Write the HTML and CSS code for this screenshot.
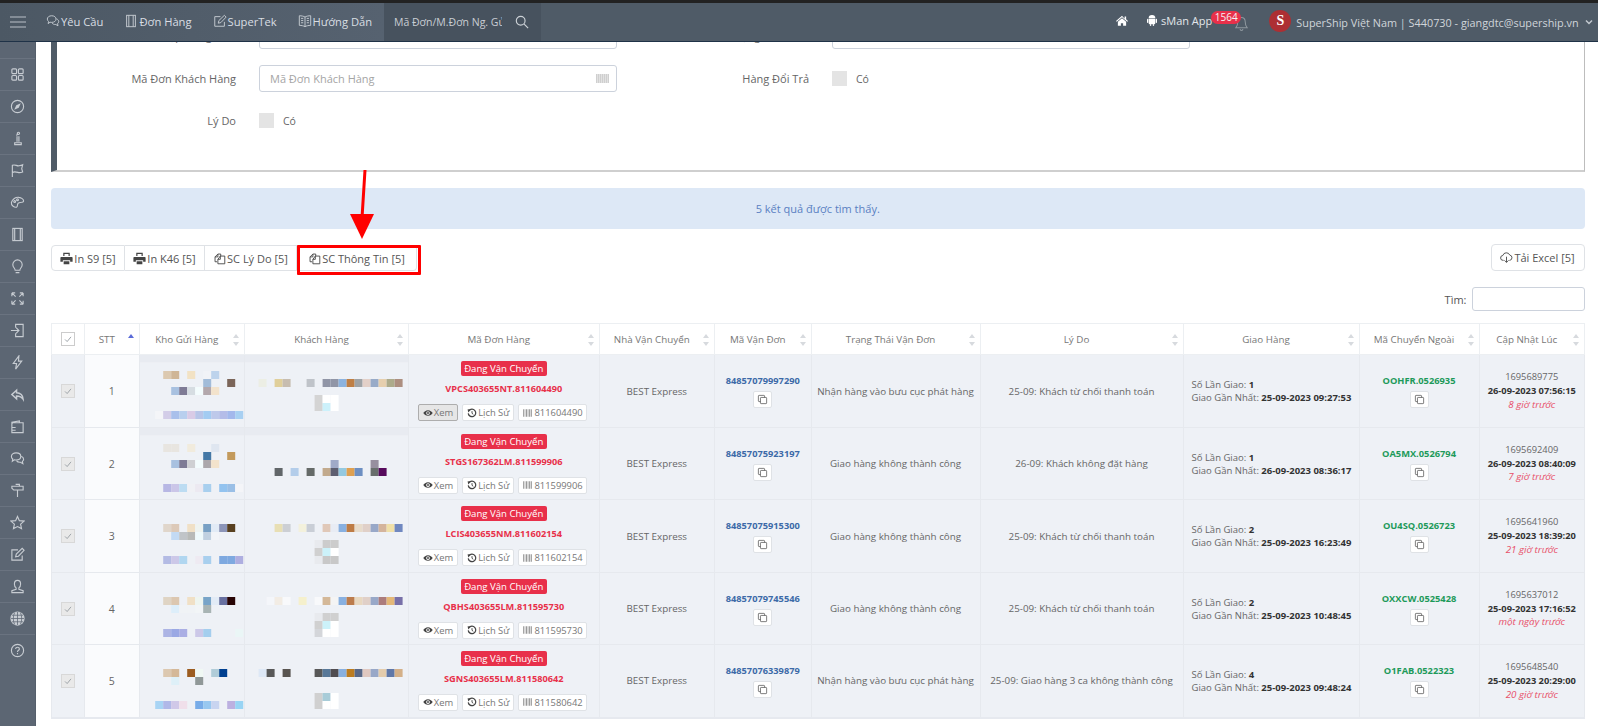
FILE: index.html
```html
<!DOCTYPE html>
<html lang="vi">
<head>
<meta charset="utf-8">
<title>SuperShip</title>
<link rel="stylesheet" href="styles.css">
</head>
<body>
<svg class="defs" xmlns="http://www.w3.org/2000/svg">
  <symbol id="i-copy" viewBox="0 0 16 16"><path d="M5 11H3a1 1 0 0 1-1-1V3a1 1 0 0 1 1-1h7a1 1 0 0 1 1 1v2"/><rect x="5" y="5" width="9" height="9" rx="1"/></symbol>
  <symbol id="i-copy2" viewBox="0 0 16 16"><path d="M5 12H2.500V6L6 2.500h3.500V5"/><path d="M6 2.500V6H2.500"/><path d="M9 5h5.500v9.500H6V9z"/><path d="M9 5v4H6"/></symbol>
  <symbol id="i-print" viewBox="0 0 16 16"><path class="solid" d="M4 1h8v4h-1.500V2.500h-5V5H4zM1.500 6h13a1 1 0 0 1 1 1v5h-3v-2h-9v2h-3V7a1 1 0 0 1 1-1zM4.500 11.500h7V15h-7z"/></symbol>
  <symbol id="i-eye" viewBox="0 0 16 16"><path class="solid" d="M8 3.500c3.500 0 6.200 2.500 7.500 4.500-1.300 2-4 4.500-7.500 4.500S1.800 10 .5 8C1.800 6 4.500 3.500 8 3.500zm0 1.500a3 3 0 1 0 0 6 3 3 0 0 0 0-6zm0 1.500a1.500 1.500 0 1 1 0 3 1.500 1.500 0 0 1 0-3z"/></symbol>
  <symbol id="i-hist" viewBox="0 0 16 16"><path d="M3 4.500a6 6 0 1 1-1 4" stroke-width="2"/><path class="solid" d="M1 2l5 .5L2 7z"/><path d="M8 5v3.500l2 1.500" stroke-width="1.500"/></symbol>
  <symbol id="i-bar" viewBox="0 0 16 16"><path class="solid" d="M1 2h1.500v12H1zM3.500 2h1v12h-1zM5.500 2h2v12h-2zM8.500 2h1v12h-1zM10.500 2h2v12h-2zM13.500 2h1.500v12h-1.500z"/></symbol>
  <symbol id="i-check" viewBox="0 0 14 14"><path d="M3.500 7.500l2.500 2.500 4.500-5.500"/></symbol>
  <symbol id="i-chat" viewBox="0 0 16 16"><path d="M6.500 2c3 0 5 1.700 5 3.800s-2 3.800-5 3.800c-.7 0-1.300-.1-1.900-.2L2.500 11l.4-2.500C2 7.800 1.500 6.900 1.500 5.800 1.500 3.700 3.500 2 6.500 2z"/><path d="M12 5.500c1.500.6 2.500 1.800 2.500 3.200 0 1-.5 1.800-1.300 2.400l.5 2.400-2.500-1.500c-1.800.2-3.500-.5-4.300-1.700"/></symbol>
  <symbol id="i-note" viewBox="0 0 16 16"><rect x="3" y="1.500" width="10" height="13"/><path d="M5.500 1.500v13M10.500 1.500v13"/></symbol>
  <symbol id="i-edit" viewBox="0 0 16 16"><path d="M13 9v5H2V3h6.500"/><path d="M6 10.500l.7-3L13 1.500l2 2-6 6.300z"/></symbol>
</svg>

<div class="topstrip"></div>
<header class="navbar">
  <div class="nav-left">
    <svg class="burger" viewBox="0 0 16 12"><path d="M0 1h16M0 6h16M0 11h16"/></svg>
    <a class="nav-item"><svg class="ic14"><use href="#i-chat"/></svg>Yêu Cầu</a>
    <a class="nav-item"><svg class="ic14"><use href="#i-note"/></svg>Đơn Hàng</a>
    <a class="nav-item"><svg class="ic14"><use href="#i-edit"/></svg>SuperTek</a>
    <a class="nav-item"><svg class="ic14" viewBox="0 0 16 16"><path d="M8 3.500C6.500 2.500 4 2 1.500 2v11c2.500 0 5 .5 6.500 1.500 1.500-1 4-1.500 6.500-1.500V2C12 2 9.500 2.500 8 3.500zM8 3.500v11M3.500 5H6M3.500 7.500H6M3.500 10H6M10 5h2.500M10 7.500h2.500M10 10h2.500"/></svg>Hướng Dẫn</a>
  </div>
  <div class="nav-search">
    <span class="search-text">Mã Đơn/M.Đơn Ng. Gửi</span>
    <svg class="search-ic" viewBox="0 0 16 16"><circle cx="6.500" cy="6.500" r="5"/><path d="M10.500 10.500L15 15"/></svg>
  </div>
  <div class="nav-right">
    <svg class="home" viewBox="0 0 16 14"><path d="M8 .5L0 7.500l1 1L8 2.800l7 5.700 1-1-2.500-2.200V1.500h-2v3z"/><path d="M8 4L2.500 8.500V14H6.500v-3.500h3V14H13.500V8.500z"/></svg>
    <span class="sman">
      <svg class="android" viewBox="0 0 12 14"><path d="M2 5.500h8V11a1 1 0 0 1-1 1H3a1 1 0 0 1-1-1z"/><path d="M2 5a4 4 0 0 1 8 0z"/><rect x="0" y="5.500" width="1.500" height="5" rx=".75"/><rect x="10.500" y="5.500" width="1.500" height="5" rx=".75"/><rect x="3.500" y="12" width="1.500" height="2"/><rect x="7" y="12" width="1.500" height="2"/></svg>
      sMan App
      <span class="bell-wrap">
        <svg class="bell" viewBox="0 0 14 16"><path d="M7 1.500c-2.500 0-4 2-4 4.500 0 3-.8 5-2 6.500h12c-1.200-1.500-2-3.500-2-6.500 0-2.500-1.500-4.500-4-4.500zM5.500 14a1.500 1.500 0 0 0 3 0"/></svg>
        <span class="badge-count">1564</span>
      </span>
    </span>
    <span class="avatar"><span class="avatar-s">S</span></span>
    <span class="user">SuperShip Việt Nam | S440730 - giangdtc@supership.vn</span>
    <svg class="chev" viewBox="0 0 8 6"><path d="M1 1.500l3 3 3-3"/></svg>
  </div>
</header>

<div class="body-wrap">
  <aside class="sidebar">
    <div class="side-item"><svg viewBox="0 0 16 16"><rect x="2" y="2" width="5" height="5" rx="1"/><rect x="9" y="2" width="5" height="5" rx="1"/><rect x="2" y="9" width="5" height="5" rx="1"/><rect x="9" y="9" width="5" height="5" rx="1"/></svg></div>
    <div class="side-item"><svg viewBox="0 0 16 16"><circle cx="8" cy="8" r="6.500"/><path class="solid" d="M11.500 4.500L9.300 9.300 4.500 11.500 6.700 6.700z"/></svg></div>
    <div class="side-item"><svg viewBox="0 0 16 16"><circle cx="9" cy="2.500" r="1.200"/><path d="M6.500 4.500l2.500-1M7.500 5.500v6M9.500 5.500v6"/><path d="M5 14.500h7V12.500H5z"/></svg></div>
    <div class="side-item"><svg viewBox="0 0 16 16"><path d="M2.500 15V2.500c3-1.500 4.500 1 7 .5 1.500-.2 3-.5 4-1l-1 4 1 3.500c-2 .8-3.500 1-5 .5-2-.6-4-1-6 0"/></svg></div>
    <div class="side-item"><svg viewBox="0 0 16 16"><path d="M1.500 8c1-3.500 4.500-6 8-5.500 2.500.3 5 2 5 4 0 1.500-2 1.500-3.500 1.500-2 0-3 1-3 2.500 0 1 0 2-1 2.500C5 13.500 1 11.500 1.500 8z"/><circle cx="5" cy="7" r="1"/><circle cx="8" cy="5" r="1"/></svg></div>
    <div class="side-item"><svg viewBox="0 0 16 16"><rect x="3" y="1.500" width="10" height="13"/><path d="M5 1.500v13M11 1.500v13"/></svg></div>
    <div class="side-item"><svg viewBox="0 0 16 16"><path d="M5.500 12C5.500 10 3 9 3 6a5 5 0 0 1 10 0c0 3-2.500 4-2.500 6zM6 14.500h4"/></svg></div>
    <div class="side-item"><svg viewBox="0 0 16 16"><path d="M2 2l4 4M2 2v3.500M2 2h3.500M14 2l-4 4M14 2v3.500M14 2h-3.500M2 14l4-4M2 14v-3.500M2 14h3.500M14 14l-4-4M14 14v-3.500M14 14h-3.500"/></svg></div>
    <div class="side-item"><svg viewBox="0 0 16 16"><path d="M6 5V1.500h8v13H6V11"/><path d="M1 8h8M6.500 5l3 3-3 3"/></svg></div>
    <div class="side-item"><svg viewBox="0 0 16 16"><path d="M9.500 1L3.500 9H7l-1 6 6.500-8.500H9z"/></svg></div>
    <div class="side-item"><svg viewBox="0 0 16 16"><path class="thick" d="M7 3.500L2 8l5 4.500V9.500c3 0 5.500 1 7 3.500 0-4-3-7-7-7z"/></svg></div>
    <div class="side-item"><svg viewBox="0 0 16 16"><path d="M2 6V3.500L10 2v2M2 6v8.500h12V4H3.500A1.500 1.500 0 0 0 2 6zM2 9h4M2 12h4"/></svg></div>
    <div class="side-item"><svg viewBox="0 0 16 16"><use href="#i-chat"/></svg></div>
    <div class="side-item"><svg viewBox="0 0 16 16"><path d="M2 3.500h12v4H4L2 5.500zM8 7.500V15M6 1.500h4V3.500"/></svg></div>
    <div class="side-item"><svg viewBox="0 0 16 16"><path d="M8 1.500l2 4.500 5 .5-3.700 3.300 1 4.700L8 12.300 3.700 14.500l1-4.700L1 6.500 6 6z"/></svg></div>
    <div class="side-item"><svg viewBox="0 0 16 16"><use href="#i-edit"/></svg></div>
    <div class="side-item"><svg viewBox="0 0 16 16"><path d="M8 1.500c2 0 3.300 1.500 3.300 3.700 0 2-.8 3.500-1.800 4.300v1.500L14 12.500v2H2v-2L6.500 11V9.500C5.500 8.700 4.700 7.200 4.700 5.200 4.700 3 6 1.500 8 1.500z"/></svg></div>
    <div class="side-item"><svg class="globe" viewBox="0 0 16 16"><circle cx="8" cy="8" r="7"/><path class="globe-l" d="M1 8h14M2 4.500h12M2 11.500h12M8 1v14M5 1.500c-2 4-2 9 0 13M11 1.500c2 4 2 9 0 13"/></svg></div>
    <div class="side-item"><svg viewBox="0 0 16 16"><circle cx="8" cy="8" r="6.500"/><path d="M6 6.300C6 5 7 4.500 8 4.500S10 5.200 10 6.300c0 1.500-2 1.500-2 3.200"/><path d="M8 10.700v1.300"/></svg></div>
  </aside>

  <main class="main">
    <section class="panel">
      <div class="form-row">
        <div class="field"><label class="f-label">Nhập Hàng Đơn</label><div class="f-input"></div></div>
        <div class="field field-r"><label class="f-label">Trạng Thái Đơn</label><div class="f-input"></div></div>
      </div>
      <div class="form-row">
        <div class="field"><label class="f-label">Mã Đơn Khách Hàng</label><div class="f-input"><span class="ph">Mã Đơn Khách Hàng</span><span class="f-chip"></span></div></div>
        <div class="field field-r"><label class="f-label">Hàng Đổi Trả</label><span class="f-check"></span><span class="f-yes">Có</span></div>
      </div>
      <div class="form-row form-row-last">
        <div class="field"><label class="f-label">Lý Do</label><span class="f-check"></span><span class="f-yes">Có</span></div>
      </div>
    </section>

    <div class="alert">5 kết quả được tìm thấy.</div>

    <div class="actions">
      <div class="btn-group">
        <button class="btn btn-s9"><svg class="ic13"><use href="#i-print"/></svg>In S9 [5]</button>
        <button class="btn btn-k46"><svg class="ic13"><use href="#i-print"/></svg>In K46 [5]</button>
        <button class="btn btn-ly"><svg class="ic13"><use href="#i-copy2"/></svg>SC Lý Do [5]</button>
        <button class="btn btn-tt"><svg class="ic13"><use href="#i-copy2"/></svg>SC Thông Tin [5]<span class="redbox"></span></button>
      </div>
      <button class="btn btn-excel"><svg class="ic13" viewBox="0 0 16 16"><path d="M4.500 11.500H4A3 3 0 0 1 3.500 5.500 4.500 4.500 0 0 1 12 5a3.300 3.300 0 0 1 0 6.500h-.5"/><path d="M8 7v7M5.500 11.500L8 14l2.500-2.500"/></svg>Tải Excel [5]</button>
    </div>

    <div class="find"><span>Tìm:</span><div class="find-input"></div></div>

    <table class="grid">
      <colgroup>
        <col class="c1"><col class="c2"><col class="c3"><col class="c4"><col class="c5"><col class="c6"><col class="c7"><col class="c8"><col class="c9"><col class="c10"><col class="c11"><col class="c12">
      </colgroup>
      <thead>
        <tr>
          <th class="th-check"><span class="chk chk-h"><svg><use href="#i-check"/></svg></span></th>
          <th class="sort-asc">STT</th>
          <th class="sort">Kho Gửi Hàng</th>
          <th class="sort">Khách Hàng</th>
          <th class="sort">Mã Đơn Hàng</th>
          <th class="sort">Nhà Vận Chuyển</th>
          <th class="sort">Mã Vận Đơn</th>
          <th class="sort">Trạng Thái Vận Đơn</th>
          <th class="sort">Lý Do</th>
          <th class="sort">Giao Hàng</th>
          <th class="sort">Mã Chuyển Ngoài</th>
          <th class="sort">Cập Nhật Lúc</th>
        </tr>
      </thead>
      <tbody>
        <tr>
          <td><span class="chk"><svg><use href="#i-check"/></svg></span></td>
          <td class="stt">1</td>
          <td class="mosaic"><svg class="px-kho" viewBox="-1.900 -2 13.250 8.875"><rect class="band" x="-2" y="-2"/>
            <rect x="1" y="0" fill="#dcc9b0"/><rect x="2" y="0" fill="#cfb596"/><rect x="4" y="0" fill="#f2e2c4"/><rect x="6" y="0" fill="#f1f3f7"/><rect x="7" y="0" fill="#bdd3ec"/>
            <rect x="6" y="1" fill="#a2bcd9"/><rect x="9" y="1" fill="#7b6559"/>
            <rect x="2" y="2" fill="#a8c1e0"/><rect x="3" y="2" fill="#7e7b95"/><rect x="4" y="2" fill="#d6dde2"/><rect x="5" y="2" fill="#f3fcfd"/><rect x="6" y="2" fill="#b3a8ac"/><rect x="7" y="2" fill="#f3e3cc"/>
            <rect x="0" y="5" fill="#f4f5f8"/><rect x="1" y="5" fill="#d3cde8"/><rect x="2" y="5" fill="#a9c0eb"/><rect x="3" y="5" fill="#b8cfee"/><rect x="4" y="5" fill="#d9cbe6"/><rect x="5" y="5" fill="#b8c5e8"/><rect x="6" y="5" fill="#a3ccf2"/><rect x="7" y="5" fill="#bec9ea"/><rect x="8" y="5" fill="#b4bce8"/><rect x="9" y="5" fill="#a3b8ec"/><rect x="10" y="5" fill="#a8d0f2"/>
          </svg></td>
          <td class="mosaic"><svg class="px-kh" viewBox="-1.700 -2 20.500 8.875"><rect class="band" x="-2" y="-2"/>
            <rect x="0" y="1" fill="#eceee4"/><rect x="2" y="1" fill="#e0cf9a"/><rect x="3" y="1" fill="#c7bdb0"/><rect x="6" y="1" fill="#bfc3c9"/><rect x="8" y="1" fill="#9095a6"/><rect x="9" y="1" fill="#9095a6"/><rect x="10" y="1" fill="#8cb3df"/><rect x="11" y="1" fill="#bf7f45"/><rect x="12" y="1" fill="#9fa3a6"/><rect x="13" y="1" fill="#e3d0c8"/><rect x="14" y="1" fill="#98abc8"/><rect x="15" y="1" fill="#e6cfae"/><rect x="16" y="1" fill="#adab8b"/><rect x="17" y="1" fill="#ad8f80"/>
            <rect x="7" y="3" fill="#d4d4d4"/><rect x="8" y="3" fill="#fff"/><rect x="9" y="3" fill="#fff"/>
            <rect x="7" y="4" fill="#d4d4d4"/><rect x="8" y="4" fill="#ccf1fb"/><rect x="9" y="4" fill="#fff"/>
          </svg></td>
          <td class="order">
            <span class="status">Đang Vận Chuyển</span>
            <a class="code">VPCS403655NT.811604490</a>
            <div class="mini-row"><span class="mini mini-on"><svg><use href="#i-eye"/></svg>Xem</span><span class="mini"><svg><use href="#i-hist"/></svg>Lịch Sử</span><span class="mini"><svg class="bar"><use href="#i-bar"/></svg>811604490</span></div>
          </td>
          <td>BEST Express</td>
          <td><a class="bl">84857079997290</a><span class="copy"><svg><use href="#i-copy"/></svg></span></td>
          <td>Nhận hàng vào bưu cục phát hàng</td>
          <td>25-09: Khách từ chối thanh toán</td>
          <td class="deliver">Số Lần Giao: <b>1</b><br>Giao Gần Nhất: <b>25-09-2023 09:27:53</b></td>
          <td><a class="gr">OOHFR.0526935</a><span class="copy"><svg><use href="#i-copy"/></svg></span></td>
          <td class="upd">1695689775<br><b>26-09-2023 07:56:15</b><br><i>8 giờ trước</i></td>
        </tr>
        <tr>
          <td><span class="chk"><svg><use href="#i-check"/></svg></span></td>
          <td class="stt">2</td>
          <td class="mosaic"><svg class="px-kho" viewBox="-1.900 -2 13.250 8.875"><rect class="band" x="-2" y="-2"/>
            <rect x="1" y="0" fill="#e8e5e0"/><rect x="2" y="0" fill="#e8e5e0"/><rect x="4" y="0" fill="#f1ebdd"/><rect x="7" y="0" fill="#dfe6f0"/>
            <rect x="6" y="1" fill="#4478a6"/><rect x="9" y="1" fill="#c39a5c"/>
            <rect x="2" y="2" fill="#a8c1e0"/><rect x="3" y="2" fill="#7e7b95"/><rect x="4" y="2" fill="#cfd0d3"/><rect x="5" y="2" fill="#f3fcfd"/><rect x="6" y="2" fill="#aca8ac"/><rect x="7" y="2" fill="#f3e3cc"/>
            <rect x="1" y="5" fill="#b7b7e4"/><rect x="2" y="5" fill="#cbc6e8"/><rect x="3" y="5" fill="#bcdcf2"/><rect x="4" y="5" fill="#f0f1f5"/><rect x="5" y="5" fill="#ece9f1"/><rect x="6" y="5" fill="#a8cfee"/><rect x="8" y="5" fill="#93c3ef"/><rect x="9" y="5" fill="#9abfe6"/><rect x="10" y="5" fill="#f4f5f8"/>
          </svg></td>
          <td class="mosaic"><svg class="px-kh" viewBox="-1.700 -2 20.500 8.875"><rect class="band" x="-2" y="-2"/>
            <rect x="9" y="2" fill="#a0aac8"/><rect x="14" y="2" fill="#978f9f"/>
            <rect x="2" y="3" fill="#616669"/><rect x="4" y="3" fill="#b3cdea"/><rect x="6" y="3" fill="#656a68"/><rect x="8" y="3" fill="#c2aa8d"/><rect x="9" y="3" fill="#5d5e70"/><rect x="10" y="3" fill="#94c9e0"/><rect x="11" y="3" fill="#dea051"/><rect x="12" y="3" fill="#6d8fc2"/><rect x="14" y="3" fill="#686e6c"/><rect x="15" y="3" fill="#560a5c"/>
          </svg></td>
          <td class="order">
            <span class="status">Đang Vận Chuyển</span>
            <a class="code">STGS167362LM.811599906</a>
            <div class="mini-row"><span class="mini"><svg><use href="#i-eye"/></svg>Xem</span><span class="mini"><svg><use href="#i-hist"/></svg>Lịch Sử</span><span class="mini"><svg class="bar"><use href="#i-bar"/></svg>811599906</span></div>
          </td>
          <td>BEST Express</td>
          <td><a class="bl">84857075923197</a><span class="copy"><svg><use href="#i-copy"/></svg></span></td>
          <td>Giao hàng không thành công</td>
          <td>26-09: Khách không đặt hàng</td>
          <td class="deliver">Số Lần Giao: <b>1</b><br>Giao Gần Nhất: <b>26-09-2023 08:36:17</b></td>
          <td><a class="gr">OA5MX.0526794</a><span class="copy"><svg><use href="#i-copy"/></svg></span></td>
          <td class="upd">1695692409<br><b>26-09-2023 08:40:09</b><br><i>7 giờ trước</i></td>
        </tr>
        <tr>
          <td><span class="chk"><svg><use href="#i-check"/></svg></span></td>
          <td class="stt">3</td>
          <td class="mosaic"><svg class="px-kho" viewBox="-1.900 -2 13.250 8.875">
            <rect x="1" y="1" fill="#e0d6cb"/><rect x="2" y="1" fill="#dcc9b8"/><rect x="4" y="1" fill="#f0e0c6"/><rect x="5" y="1" fill="#eef3f0"/><rect x="6" y="1" fill="#78a0c4"/><rect x="7" y="1" fill="#e2ebf6"/><rect x="8" y="1" fill="#8c95b8"/><rect x="9" y="1" fill="#584020"/>
            <rect x="2" y="2" fill="#c3daf4"/><rect x="3" y="2" fill="#c0c4c8"/><rect x="4" y="2" fill="#b8bab8"/><rect x="5" y="2" fill="#effafc"/><rect x="6" y="2" fill="#c0d0e0"/><rect x="7" y="2" fill="#f2f4f8"/>
            <rect x="1" y="5" fill="#b3bbe4"/><rect x="2" y="5" fill="#ccc8e8"/><rect x="3" y="5" fill="#b0d6f0"/><rect x="5" y="5" fill="#eeeaf2"/><rect x="6" y="5" fill="#a8cfee"/><rect x="8" y="5" fill="#7ea9e0"/><rect x="9" y="5" fill="#7ea9e0"/><rect x="10" y="5" fill="#aeaee0"/>
          </svg></td>
          <td class="mosaic"><svg class="px-kh" viewBox="-1.700 -2 20.500 8.875">
            <rect x="2" y="1" fill="#e8dfb4"/><rect x="3" y="1" fill="#cccfd4"/><rect x="5" y="1" fill="#f3f1dc"/><rect x="6" y="1" fill="#c9ced6"/><rect x="8" y="1" fill="#e0c8b8"/><rect x="9" y="1" fill="#e8ecf4"/><rect x="10" y="1" fill="#88b0e0"/><rect x="11" y="1" fill="#be7c45"/><rect x="12" y="1" fill="#e8dccb"/><rect x="13" y="1" fill="#e0d0c8"/><rect x="14" y="1" fill="#98a8c8"/><rect x="15" y="1" fill="#d4b49c"/><rect x="16" y="1" fill="#f0e0a8"/><rect x="17" y="1" fill="#7088c0"/>
            <rect x="7" y="3" fill="#e8eaee"/><rect x="8" y="3" fill="#ccc"/><rect x="9" y="3" fill="#ccc"/>
            <rect x="7" y="4" fill="#d0d0d0"/><rect x="8" y="4" fill="#ccf2fa"/><rect x="9" y="4" fill="#fff"/>
            <rect x="7" y="5" fill="#e8eaee"/><rect x="8" y="5" fill="#c8c8c8"/><rect x="9" y="5" fill="#c8c8c8"/>
          </svg></td>
          <td class="order">
            <span class="status">Đang Vận Chuyển</span>
            <a class="code">LCIS403655NM.811602154</a>
            <div class="mini-row"><span class="mini"><svg><use href="#i-eye"/></svg>Xem</span><span class="mini"><svg><use href="#i-hist"/></svg>Lịch Sử</span><span class="mini"><svg class="bar"><use href="#i-bar"/></svg>811602154</span></div>
          </td>
          <td>BEST Express</td>
          <td><a class="bl">84857075915300</a><span class="copy"><svg><use href="#i-copy"/></svg></span></td>
          <td>Giao hàng không thành công</td>
          <td>25-09: Khách từ chối thanh toán</td>
          <td class="deliver">Số Lần Giao: <b>2</b><br>Giao Gần Nhất: <b>25-09-2023 16:23:49</b></td>
          <td><a class="gr">OU4SQ.0526723</a><span class="copy"><svg><use href="#i-copy"/></svg></span></td>
          <td class="upd">1695641960<br><b>25-09-2023 18:39:20</b><br><i>21 giờ trước</i></td>
        </tr>
        <tr>
          <td><span class="chk"><svg><use href="#i-check"/></svg></span></td>
          <td class="stt">4</td>
          <td class="mosaic"><svg class="px-kho" viewBox="-1.900 -2 13.250 8.875">
            <rect x="1" y="1" fill="#dfd4c4"/><rect x="2" y="1" fill="#dcc7b0"/><rect x="4" y="1" fill="#f0e0c6"/><rect x="5" y="1" fill="#eef5f0"/><rect x="6" y="1" fill="#78a4c8"/><rect x="7" y="1" fill="#e2ebf6"/><rect x="8" y="1" fill="#6870a0"/><rect x="9" y="1" fill="#280404"/>
            <rect x="2" y="2" fill="#ddeefa"/><rect x="3" y="2" fill="#f0f3f6"/><rect x="4" y="2" fill="#f0f3f6"/><rect x="5" y="2" fill="#f2f5f7"/><rect x="6" y="2" fill="#a8b4b4"/>
            <rect x="1" y="5" fill="#acb4e4"/><rect x="2" y="5" fill="#9aa8e4"/><rect x="3" y="5" fill="#aaaee4"/><rect x="5" y="5" fill="#ccc8e8"/><rect x="6" y="5" fill="#a4ceee"/><rect x="10" y="5" fill="#eaf6f6"/>
          </svg></td>
          <td class="mosaic"><svg class="px-kh" viewBox="-1.700 -2 20.500 8.875">
            <rect x="1" y="1" fill="#f4f6fa"/><rect x="2" y="1" fill="#f2ece4"/><rect x="3" y="1" fill="#f8f9fb"/><rect x="5" y="1" fill="#f5f0cc"/><rect x="7" y="1" fill="#f8f9fb"/><rect x="8" y="1" fill="#d4b898"/><rect x="9" y="1" fill="#f4f4f4"/><rect x="10" y="1" fill="#88b0e0"/><rect x="11" y="1" fill="#bc7c4c"/><rect x="12" y="1" fill="#e8d8c0"/><rect x="13" y="1" fill="#e0d0c8"/><rect x="14" y="1" fill="#98a8c8"/><rect x="15" y="1" fill="#ac7c7c"/><rect x="16" y="1" fill="#e4b878"/><rect x="17" y="1" fill="#7870a8"/>
            <rect x="7" y="3" fill="#e8eaee"/><rect x="8" y="3" fill="#d0d0d0"/><rect x="9" y="3" fill="#d0d0d0"/>
            <rect x="7" y="4" fill="#d0d0d0"/><rect x="8" y="4" fill="#ccf2fa"/><rect x="9" y="4" fill="#fff"/>
            <rect x="7" y="5" fill="#d4d6da"/><rect x="8" y="5" fill="#fff"/><rect x="9" y="5" fill="#fff"/>
          </svg></td>
          <td class="order">
            <span class="status">Đang Vận Chuyển</span>
            <a class="code">QBHS403655LM.811595730</a>
            <div class="mini-row"><span class="mini"><svg><use href="#i-eye"/></svg>Xem</span><span class="mini"><svg><use href="#i-hist"/></svg>Lịch Sử</span><span class="mini"><svg class="bar"><use href="#i-bar"/></svg>811595730</span></div>
          </td>
          <td>BEST Express</td>
          <td><a class="bl">84857079745546</a><span class="copy"><svg><use href="#i-copy"/></svg></span></td>
          <td>Giao hàng không thành công</td>
          <td>25-09: Khách từ chối thanh toán</td>
          <td class="deliver">Số Lần Giao: <b>2</b><br>Giao Gần Nhất: <b>25-09-2023 10:48:45</b></td>
          <td><a class="gr">OXXCW.0525428</a><span class="copy"><svg><use href="#i-copy"/></svg></span></td>
          <td class="upd">1695637012<br><b>25-09-2023 17:16:52</b><br><i>một ngày trước</i></td>
        </tr>
        <tr>
          <td><span class="chk"><svg><use href="#i-check"/></svg></span></td>
          <td class="stt">5</td>
          <td class="mosaic"><svg class="px-kho" viewBox="-1.900 -2 13.250 8.875">
            <rect x="1" y="1" fill="#dcc8b0"/><rect x="2" y="1" fill="#d4b898"/><rect x="4" y="1" fill="#9c5c20"/><rect x="5" y="1" fill="#f0f8f4"/><rect x="7" y="1" fill="#b0ccd8"/><rect x="8" y="1" fill="#004090"/>
            <rect x="2" y="2" fill="#def0f8"/><rect x="5" y="2" fill="#909898"/>
            <rect x="0" y="5" fill="#a8d4f4"/><rect x="1" y="5" fill="#b0b8e8"/><rect x="2" y="5" fill="#d0c8e8"/><rect x="3" y="5" fill="#f0dfea"/><rect x="5" y="5" fill="#78ace8"/><rect x="6" y="5" fill="#98c8f0"/><rect x="7" y="5" fill="#c8d4f0"/><rect x="9" y="5" fill="#bcb0e0"/><rect x="10" y="5" fill="#98d4f4"/>
          </svg></td>
          <td class="mosaic"><svg class="px-kh" viewBox="-1.700 -2 20.500 8.875">
            <rect x="0" y="1" fill="#dde8f6"/><rect x="1" y="1" fill="#585858"/><rect x="3" y="1" fill="#585450"/><rect x="7" y="1" fill="#585858"/><rect x="8" y="1" fill="#587898"/><rect x="9" y="1" fill="#504c50"/><rect x="10" y="1" fill="#88b0e0"/><rect x="11" y="1" fill="#bc7c20"/><rect x="12" y="1" fill="#586888"/><rect x="13" y="1" fill="#e0c8c0"/><rect x="14" y="1" fill="#98a8c8"/><rect x="15" y="1" fill="#e4ccac"/><rect x="16" y="1" fill="#6078a8"/><rect x="17" y="1" fill="#d4b088"/>
            <rect x="7" y="4" fill="#d0d0d0"/><rect x="8" y="4" fill="#a8ccd8"/><rect x="9" y="4" fill="#fff"/>
            <rect x="7" y="5" fill="#d0d0d0"/><rect x="8" y="5" fill="#fff"/><rect x="9" y="5" fill="#fff"/>
          </svg></td>
          <td class="order">
            <span class="status">Đang Vận Chuyển</span>
            <a class="code">SGNS403655LM.811580642</a>
            <div class="mini-row"><span class="mini"><svg><use href="#i-eye"/></svg>Xem</span><span class="mini"><svg><use href="#i-hist"/></svg>Lịch Sử</span><span class="mini"><svg class="bar"><use href="#i-bar"/></svg>811580642</span></div>
          </td>
          <td>BEST Express</td>
          <td><a class="bl">84857076339879</a><span class="copy"><svg><use href="#i-copy"/></svg></span></td>
          <td>Nhận hàng vào bưu cục phát hàng</td>
          <td>25-09: Giao hàng 3 ca không thành công</td>
          <td class="deliver">Số Lần Giao: <b>4</b><br>Giao Gần Nhất: <b>25-09-2023 09:48:24</b></td>
          <td><a class="gr">O1FAB.0522323</a><span class="copy"><svg><use href="#i-copy"/></svg></span></td>
          <td class="upd">1695648540<br><b>25-09-2023 20:29:00</b><br><i>20 giờ trước</i></td>
        </tr>
      </tbody>
    </table>
  </main>
</div>

<svg class="arrow" viewBox="0 0 30 72"><path class="arrow-s" d="M18 2L15 50"/><path class="arrow-h" d="M3 46H27L15 71z"/></svg>
</body>
</html>
```

FILE: styles.css
```css
* { box-sizing: border-box; }
html, body { margin: 0; padding: 0; height: 726px; overflow: hidden; }
body { font-family: "Open Sans", "Liberation Sans", sans-serif; background: #fff; color: #666; font-size: 11px; position: relative; }
.defs { display: none; }
svg { fill: none; stroke: currentColor; stroke-width: 1.1; flex: none; }
.solid { fill: currentColor; stroke: none; }

.topstrip { height: 3px; background: #222; }
.navbar { height: 39px; display: flex; background: #4f5b67; border-bottom: 1px solid #1f3247; color: #d9dee3; font-size: 11.200px; }
.nav-left { width: 384px; display: flex; align-items: center; background: linear-gradient(90deg, #4c5864, #566270); padding-bottom: 2px; overflow: hidden; }
.burger { width: 16px; height: 12px; margin-left: 10px; margin-right: 20px; margin-top: 2px; color: #b9c0c7; stroke-width: 1.200; }
.nav-item { display: flex; align-items: center; gap: 1px; margin-right: 21px; white-space: nowrap; }
.ic14 { width: 14px; height: 14px; color: #c3c9cf; }
.nav-search { width: 157px; background: #47525e; display: flex; align-items: center; padding-left: 10px; color: #c9ced4; font-size: 10.500px; }
.search-text { width: 108px; overflow: hidden; white-space: nowrap; }
.search-ic { width: 14px; height: 14px; margin-left: 13px; color: #cdd2d7; stroke-width: 1.300; }
.nav-right { flex: 1; display: flex; align-items: center; color: #cfd5da; }
.home { width: 12px; height: 11px; margin-left: 575px; margin-top: -4px; color: #fff; fill: currentColor; stroke: none; }
.sman { display: flex; align-items: center; margin-left: 19px; color: #e3e7ea; margin-top: -4px; font-size: 11px; white-space: nowrap; }
.android { width: 10px; height: 12px; margin-right: 4px; color: #fff; fill: currentColor; stroke: none; }
.bell-wrap { position: relative; width: 14px; height: 16px; margin-left: 23px; margin-top: 8px; }
.bell { display: block; width: 13px; height: 15px; color: #8f989f; }
.badge-count { position: absolute; left: -24px; top: -5px; width: 30px; height: 13px; border-radius: 7px; background: #e8304a; color: #f4f4f4; font-size: 10px; line-height: 13px; text-align: center; }
.avatar { width: 22px; height: 22px; border-radius: 50%; background: #ad2f33; margin-left: 20px; margin-top: -2px; display: flex; align-items: center; justify-content: center; flex: none; }
.avatar-s { color: #fff; font: bold 14px "Liberation Serif", serif; }
.user { margin-left: 5px; white-space: nowrap; font-size: 10.850px; }
.chev { width: 8px; height: 6px; margin-left: 6px; color: #c3c9cf; stroke-width: 1.500; }

.body-wrap { display: flex; height: 684px; }
.sidebar { width: 35.500px; flex: none; background: #5c6673; padding-top: 16px; border-right: 1px solid #555f6b; }
.side-item { height: 32px; border-top: 1px solid #6a7380; display: flex; align-items: center; justify-content: center; color: #c7ccd2; }
.side-item svg { width: 15px; height: 15px; stroke-width: 1.200; }
.side-item .thick { stroke-width: 1.600; }
.side-item .globe { fill: currentColor; }
.globe-l { stroke: #5c6673; stroke-width: .8; fill: none; }

.main { flex: 1; overflow: hidden; padding: 0 13.500px 0 15.500px; position: relative; }
.panel { margin-top: -20px; height: 150px; border-left: 6px solid #4f5b67; border-right: 1px solid #bdbdbd; border-bottom: 2px solid #cfcfcf; display: flex; flex-direction: column; gap: 16px; }
.form-row { display: flex; height: 27px; }
.form-row-last { margin-top: -1px; }
.field { display: flex; align-items: center; width: 560px; }
.field-r { width: auto; }
.f-label { width: 179px; text-align: right; margin-right: 23px; color: #666; font-size: 11px; white-space: nowrap; }
.field-r .f-label { width: 192px; }
.f-input { width: 358px; height: 27px; border: 1px solid #ccd2dc; border-radius: 3px; display: flex; align-items: center; justify-content: space-between; padding: 0 7px 0 10px; }
.ph { color: #a5a5a5; font-size: 11px; }
.f-chip { width: 13px; height: 9px; background: repeating-linear-gradient(90deg, #cfcfcf 0 1px, #e2e2e2 1px 2px); }
.f-check { width: 15px; height: 15px; background: #e4e4e4; }
.f-yes { margin-left: 9px; font-size: 10.500px; color: #666; }

.alert { margin-top: 16px; height: 41px; background: #dde8f6; border-radius: 4px; padding-bottom: 1px; display: flex; align-items: center; justify-content: center; color: #5a80c2; font-size: 11px; }

.actions { margin-top: 16px; display: flex; justify-content: space-between; align-items: flex-start; height: 26px; }
.btn-group { display: flex; }
.btn { height: 26px; background: #fff; border: 1px solid #dfe2e6; border-left-width: 0; color: #555; font: 11px "Open Sans", sans-serif; display: flex; align-items: center; justify-content: center; gap: 1px; padding: 0; position: relative; white-space: nowrap; }
.btn-s9 { width: 74px; border-left-width: 1px; border-radius: 4px 0 0 4px; }
.btn-k46 { width: 80px; }
.btn-ly { width: 92px; }
.btn-tt { width: 120px; border-radius: 0 4px 4px 0; }
.btn-excel { width: 94px; height: 27px; border-left-width: 1px; border-radius: 4px; margin-top: -1px; }
.ic13 { width: 13px; height: 13px; color: #444; }
.redbox { position: absolute; left: 0; top: -1px; width: 124px; height: 30px; border: 3px solid #f00; border-radius: 1px; }

.find { margin-top: 16px; height: 24px; display: flex; justify-content: flex-end; align-items: center; gap: 5px; color: #555; font-size: 11px; }
.find-input { width: 113px; height: 24px; border: 1px solid #ccd2dc; border-radius: 3px; }

.grid { margin-top: 12px; width: 1533px; table-layout: fixed; border-collapse: collapse; font-size: 9.800px; border-bottom: 2px solid #e6e9ef; }
.c1 { width: 33px; } .c2 { width: 54.500px; } .c3 { width: 105.500px; } .c4 { width: 164px; } .c5 { width: 190.500px; } .c6 { width: 115.500px; } .c7 { width: 96.500px; } .c8 { width: 169px; } .c9 { width: 203px; } .c10 { width: 176px; } .c11 { width: 120px; } .c12 { width: 105.500px; }
.grid th { height: 31px; font-weight: 400; color: #777; border: 1px solid #eceff2; padding: 0 10px 0 0; text-align: center; position: relative; background: #fff; white-space: nowrap; }
.grid td { height: 72px; background: #eef1f6; border: 1px solid #e6e9ee; padding: 0; text-align: center; vertical-align: middle; color: #666; }
.grid tbody tr:nth-child(odd) td { height: 73px; }
.grid .th-check { padding: 0; }
.sort::before, .sort::after { content: ""; position: absolute; right: 5px; border-left: 3px solid transparent; border-right: 3px solid transparent; }
.sort::before { top: 10px; border-bottom: 4px solid #d7dade; }
.sort::after { top: 18px; border-top: 4px solid #d7dade; }
.sort-asc::before { content: ""; position: absolute; right: 5px; top: 10px; border-left: 3px solid transparent; border-right: 3px solid transparent; border-bottom: 4px solid #5a6bd8; }
.chk { display: inline-block; width: 14px; height: 14px; border: 1px solid #d8d8d8; background: #e9e9e9; vertical-align: middle; color: #9aa0a6; }
.chk-h { background: #fff; border-color: #ccc; }
.chk svg { display: block; width: 12px; height: 12px; }
.grid .stt { background: #fafbfd; font-size: 10.500px; }

.grid .mosaic { padding: 0; overflow: hidden; vertical-align: top; }
.mosaic svg { display: block; height: 71px; stroke: none; }
.px-kho { width: 106px; }
.px-kh { width: 164px; }
.mosaic rect { width: 1px; height: 1px; }
.mosaic .band { width: 24px; height: .9px; fill: #e8ebf1; }

.status { display: block; width: 86px; margin: 0 auto; background: #e8304a; color: #fff; height: 15px; line-height: 15px; border-radius: 2px; font-size: 9.600px; white-space: nowrap; }
.code { display: block; color: #e8304a; font-weight: 700; font-size: 9.200px; line-height: 13px; margin-top: 6px; }
.mini-row { display: flex; justify-content: center; gap: 4px; margin-top: 9px; padding-right: 3px; }
.mini { height: 17px; background: #fff; border: 1px solid #dfe2e6; border-radius: 2px; display: flex; align-items: center; gap: 1px; padding: 0 4px; font-size: 9.400px; color: #777; white-space: nowrap; }
.mini:last-child { padding: 0 3px; }
.mini svg { width: 10px; height: 10px; color: #444; }
.mini .bar { color: #999; width: 11px; }
.mini-on { background: #e6e6e6; border-color: #adadad; }
.bl { display: block; color: #3c6aa8; font-weight: 700; font-size: 9.250px; line-height: 13px; }
.gr { display: block; color: #1d9a5a; font-weight: 700; font-size: 9.300px; line-height: 13px; }
.copy { display: flex; align-items: center; justify-content: center; width: 19px; height: 17px; margin: 4px auto 0; background: #fff; border: 1px solid #dfe2e6; border-radius: 2px; color: #555; }
.copy svg { width: 11px; height: 11px; }
.grid .deliver { text-align: left; padding-left: 8px; line-height: 13px; font-size: 9.500px; }
.deliver b { color: #333; font-weight: 700; }
.grid .upd { line-height: 13.700px; font-size: 9.300px; }
.upd b { color: #333; font-weight: 700; }
.upd i { color: #e8506a; font-size: 9.800px; }

.arrow { position: absolute; left: 347px; top: 168px; width: 30px; height: 72px; }
.arrow-s { stroke: #f00; stroke-width: 3; }
.arrow-h { fill: #f00; stroke: none; }
```
